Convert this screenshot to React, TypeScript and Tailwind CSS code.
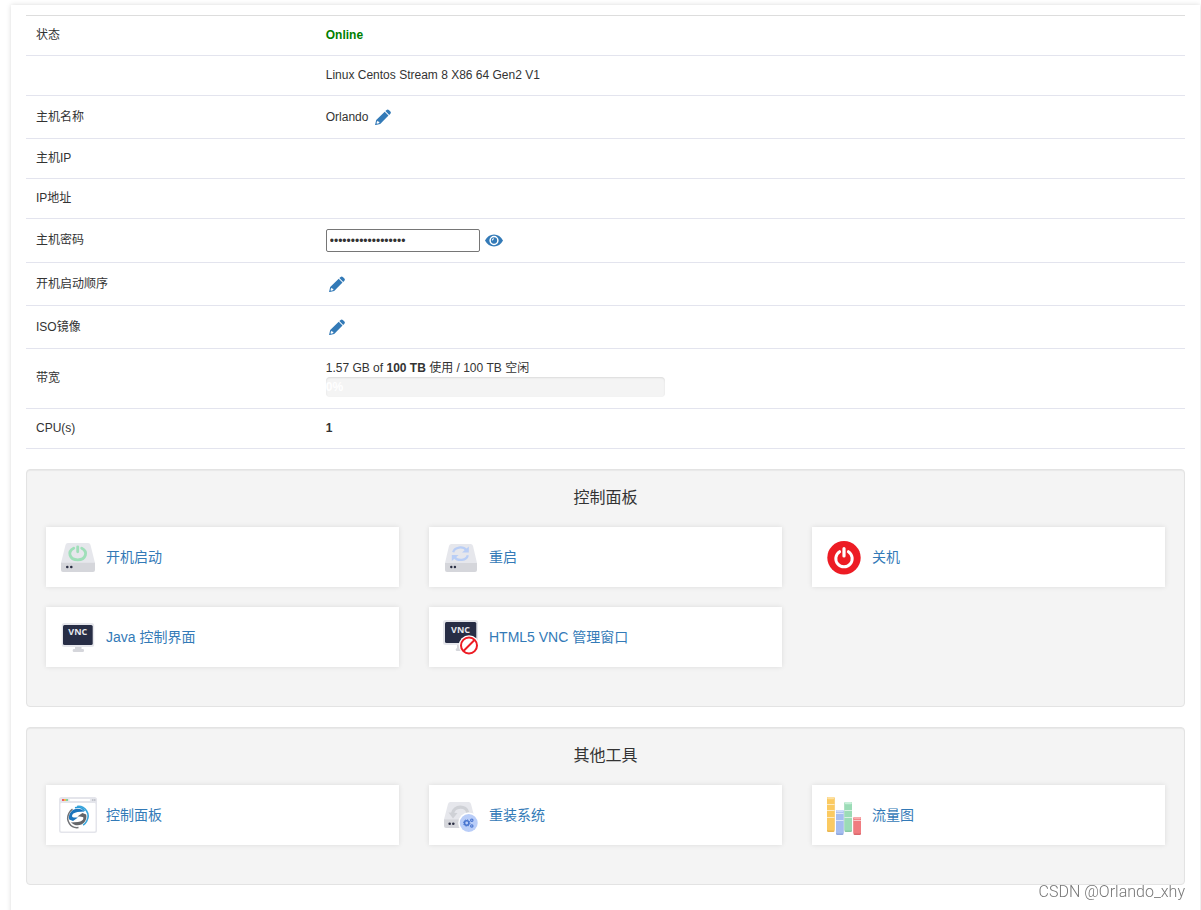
import { useState } from 'react';
import type { ReactNode } from 'react';

interface ToolItem {
  label: string;
  icon: ReactNode;
}

function PencilIcon() {
  return (
    <svg viewBox="0 0 16 16" className="block size-4" fill="#337ab7" aria-hidden="true">
      <path d="M11.600.9q1.100-1 2.200 0l1.600 1.600q1 1.100 0 2.200l-1.200 1.200-3.800-3.800z" />
      <path fillRule="evenodd" d="M9.700 2.800l3.800 3.800-8.300 8.300L0 16.200l1.200-5.100zM2.200 11.800l-.7 2.400.6.500 2.300-.6-.2-1.400-1.300-.2z" />
    </svg>
  );
}

function EyeIcon() {
  return (
    <svg viewBox="0 0 18 13" className="block h-[13px] w-[18px]" aria-hidden="true">
      <path d="M0 6.500C2 2.800 5.200.5 9 .5s7 2.300 9 6c-2 3.700-5.200 6-9 6s-7-2.300-9-6z" fill="#337ab7" />
      <circle cx="9" cy="6.500" r="3.900" fill="none" stroke="#fff" strokeWidth="1.500" />
      <path d="M7.300 6.300A1.900 1.900 0 0 1 9 4.800" stroke="#fff" strokeWidth="1.100" fill="none" />
    </svg>
  );
}

function StartIcon() {
  return (
    <svg viewBox="0 0 40 40" className="size-10 shrink-0" aria-hidden="true">
      <path d="M10 6h20q2 0 2.500 2L37 26H3L7.500 8Q8 6 10 6z" fill="#e6e7ec" />
      <path d="M3 25.700h34V33q0 2-2 2H5q-2 0-2-2z" fill="#d5d6db" />
      <circle cx="9.300" cy="30" r="1.300" fill="#2a2e43" />
      <circle cx="13.300" cy="30" r="1.300" fill="#2a2e43" />
      <path d="M15.700 11.200c-6.600 3.400-4.400 11.600 4 11.600s10.600-8.200 4-11.600" fill="none" stroke="#9fdfb9" strokeWidth="2.800" strokeLinecap="round" />
      <path d="M19.700 9.800v5" stroke="#9fdfb9" strokeWidth="2.800" strokeLinecap="round" />
    </svg>
  );
}

function RestartIcon() {
  return (
    <svg viewBox="0 0 40 40" className="size-10 shrink-0" aria-hidden="true">
      <path d="M10.500 7h19q2 0 2.500 2L36 26H4L8 9q.5-2 2.500-2z" fill="#e6e7ec" />
      <path d="M4 26h32v7q0 2-2 2H6q-2 0-2-2z" fill="#d5d6db" />
      <circle cx="10.300" cy="30" r="1.200" fill="#2a2e43" />
      <circle cx="13.900" cy="30" r="1.200" fill="#2a2e43" />
      <g fill="none" stroke="#b9cef6" strokeWidth="2.300">
        <path d="M12.200 15.200c1.300-5.400 9.800-6.300 13.300-2" />
        <path d="M26.800 18.200c-1.300 5.400-9.800 6.300-13.300 2" />
      </g>
      <path d="M27.800 9.500v6h-6.800zM10.800 24v-6h6.800z" fill="#b9cef6" />
    </svg>
  );
}

function ShutdownIcon() {
  return (
    <svg viewBox="0 0 40 40" className="size-10 shrink-0" aria-hidden="true">
      <circle cx="20" cy="20.700" r="16.700" fill="#ed1c24" />
      <path d="M15.600 14.700a8.200 8.200 0 1 0 8.800 0" fill="none" stroke="#fff" strokeWidth="3" strokeLinecap="round" />
      <path d="M20 11.700v7.300" stroke="#fff" strokeWidth="3.200" strokeLinecap="round" />
    </svg>
  );
}

function VncIcon() {
  return (
    <svg viewBox="0 0 40 40" className="size-10 shrink-0" aria-hidden="true">
      <path d="M17 29h6.500v4H17z" fill="#d5d6db" />
      <rect x="14.700" y="32" width="11.300" height="3" rx="1.200" fill="#d5d6db" />
      <rect x="3.700" y="6" width="32.500" height="24" rx="2.500" fill="#e6e7ec" />
      <rect x="5" y="8" width="29.700" height="20" rx="1.500" fill="#272d45" />
      <text x="19.800" y="18" textAnchor="middle" fontSize="9" fontWeight="700" fontFamily="Open Sans, sans-serif" fill="#e6e7ec">VNC</text>
    </svg>
  );
}

function VncBlockedIcon() {
  return (
    <svg viewBox="0 0 40 40" className="size-10 shrink-0" aria-hidden="true">
      <path d="M16 28h7v3h3v3H15.500q-2-1.500.5-3z" fill="#d5d6db" />
      <rect x="2" y="3" width="35" height="25" rx="2.500" fill="#e6e7ec" />
      <rect x="4" y="5" width="31.300" height="21" rx="1.500" fill="#272d45" />
      <text x="19.500" y="16" textAnchor="middle" fontSize="9" fontWeight="700" fontFamily="Open Sans, sans-serif" fill="#e6e7ec">VNC</text>
      <circle cx="28" cy="28.500" r="10.200" fill="#fff" />
      <circle cx="28" cy="28.500" r="8" fill="#fff" stroke="#ed1c24" strokeWidth="2" />
      <path d="M22.500 34l11-11" stroke="#ed1c24" strokeWidth="2" />
    </svg>
  );
}

function PanelIcon() {
  return (
    <svg viewBox="0 0 40 40" className="size-10 shrink-0" aria-hidden="true">
      <rect x="1" y="2" width="38" height="36" rx="2.500" fill="#e4e5eb" />
      <rect x="2.500" y="8" width="35" height="28.500" rx="1" fill="#fff" />
      <rect x="11.300" y="4" width="21" height="2" rx="1" fill="#fff" />
      <path d="M4 4h2v2H4z" fill="#ee5c64" />
      <path d="M6 4h2v2H6z" fill="#f5b94d" />
      <path d="M8 4h2v2H8z" fill="#82cf9f" />
      <path d="M34 4h1.500v2H34zM36 4h1.500v2H36z" fill="#c3c5cc" />
      <path d="M11.200 24.500C9.500 17 17 11.500 23.500 14.500l3 2-7 .5q-5.500 1-5.500 4 0 1.500 3.500 1.500h2.500l-5 3.500z" fill="#1c75bc" />
      <path d="M28.200 19.500c1.700 7.500-5.800 13-12.300 10l-3-2 7-.5q5.500-1 5.500-4 0-1.500-3.500-1.500h-2.500l5-3.500z" fill="#636569" />
      <path d="M17 12.800q6-1.800 9.500 3.200" fill="none" stroke="#2b9bd8" strokeWidth="1.500" />
      <path d="M19 11.500c8.500-1 13.500 7.500 9.800 14.500-1 2-2.200 3.200-3.700 4.200" fill="none" stroke="#38a5dc" strokeWidth="1.600" />
      <path d="M20.500 32.500c-8 1.200-13-7-9.700-14 1-2 2.200-3.300 3.700-4.300" fill="none" stroke="#707276" strokeWidth="1.500" />
    </svg>
  );
}

function ReinstallIcon() {
  return (
    <svg viewBox="0 0 40 40" className="size-10 shrink-0" aria-hidden="true">
      <path d="M9.500 7h18q2 0 2.500 2l4 15.500H3L7 9q.5-2 2.500-2z" fill="#e6e7ec" />
      <path d="M3 24.300h31V33H5q-2 0-2-2z" fill="#d5d6db" />
      <circle cx="8.700" cy="28.700" r="1.300" fill="#2a2e43" />
      <circle cx="12.300" cy="28.700" r="1.300" fill="#2a2e43" />
      <path d="M11.500 18.500c1.500-8.500 14-8.300 15.200-1" fill="none" stroke="#cfd1d6" strokeWidth="3.200" />
      <path d="M7.500 17.500l9 .5-4.500 5.500z" fill="#cfd1d6" />
      <circle cx="27.700" cy="28" r="10.500" fill="#fff" />
      <circle cx="27.700" cy="28" r="9" fill="#b9cdf8" />
      <g fill="none" stroke="#4774cf">
        <circle cx="25.700" cy="28" r="2.200" strokeWidth="1.600" />
        <circle cx="25.700" cy="28" r="3.200" strokeWidth="1" strokeDasharray="1.200 1.300" />
        <circle cx="30.800" cy="25.200" r="1.200" strokeWidth="1.100" />
        <circle cx="30.800" cy="30.900" r="1.200" strokeWidth="1.100" />
      </g>
    </svg>
  );
}

const bars = [
  { x: 3, y: 2, height: 35, body: '#fbca61', top: '#fde0a0', foot: '#e9b64f', cuts: [9, 15, 22] },
  { x: 12, y: 15, height: 25, body: '#a5bdf0', top: '#cddbfa', foot: '#8fa8df', cuts: [18, 25] },
  { x: 20.500, y: 7, height: 30, body: '#9bdcb6', top: '#c8f0d9', foot: '#88c9a3', cuts: [15, 22] },
  { x: 29.500, y: 22, height: 18, body: '#f07c80', top: '#f8abad', foot: '#db686d', cuts: [25] },
];

function TrafficIcon() {
  return (
    <svg viewBox="0 0 40 40" className="size-10 shrink-0" aria-hidden="true">
      {bars.map((bar) => (
        <g key={bar.x}>
          <rect x={bar.x} y={bar.y} width="7.500" height={bar.height} rx="1.200" fill={bar.foot} />
          <rect x={bar.x} y={bar.y} width="7.500" height={bar.height - 1.500} rx="1.200" fill={bar.body} />
          <rect x={bar.x} y={bar.y} width="7.500" height="2.200" rx="1.100" fill={bar.top} />
          {bar.cuts.map((cut) => (
            <rect key={cut} x={bar.x} y={cut} width="7.500" height="1" fill="#fff" opacity="0.6" />
          ))}
        </g>
      ))}
    </svg>
  );
}

const controls: ToolItem[] = [
  { label: '开机启动', icon: <StartIcon /> },
  { label: '重启', icon: <RestartIcon /> },
  { label: '关机', icon: <ShutdownIcon /> },
  { label: 'Java 控制界面', icon: <VncIcon /> },
  { label: 'HTML5 VNC 管理窗口', icon: <VncBlockedIcon /> },
];

const tools: ToolItem[] = [
  { label: '控制面板', icon: <PanelIcon /> },
  { label: '重装系统', icon: <ReinstallIcon /> },
  { label: '流量图', icon: <TrafficIcon /> },
];

function EditButton({ label }: { label: string }) {
  return (
    <button type="button" aria-label={label} className="cursor-pointer px-[3px] py-0.5">
      <PencilIcon />
    </button>
  );
}

function Row({ label, children }: { label: ReactNode; children?: ReactNode }) {
  return (
    <tr className="border-t border-[#e3e4ee] first:border-[#dddddd]">
      <th scope="row" className="h-10 w-1/4 px-2.5 py-[11px] text-left font-normal">{label}</th>
      <td className="px-2.5 py-[11px]">{children}</td>
    </tr>
  );
}

function ToolPanel({ title, items }: { title: string; items: ToolItem[] }) {
  return (
    <section className="mt-5 rounded border border-[#e3e3e3] bg-[#f4f4f4] px-[19px] pb-[39px] shadow-[inset_0_1px_1px_rgba(0,0,0,0.05)]">
      <h2 className="pt-4 pb-[17px] text-center text-base leading-6">{title}</h2>
      <div className="grid grid-cols-3 gap-x-[30px] gap-y-5">
        {items.map((item) => (
          <a
            key={item.label}
            href="#"
            className="flex h-[60px] items-center gap-2 bg-white px-3 text-sm text-[#337ab7] shadow-[0_0_5px_rgba(0,0,0,0.1)] hover:underline"
          >
            {item.icon}
            <span>{item.label}</span>
          </a>
        ))}
      </div>
    </section>
  );
}

export default function App() {
  const [showPassword, setShowPassword] = useState(false);
  const [password, setPassword] = useState('aB3dE5gH7jK9mN2pQ4');

  return (
    <div className="min-h-screen overflow-hidden bg-white pt-[5px] pr-px pl-[11px] font-['Liberation_Sans','Noto_Sans_CJK_SC',sans-serif] text-xs leading-[17px] text-[#333]">
      <main className="min-h-screen bg-white px-[15px] pt-2.5 shadow-[0_0_5px_rgba(0,0,0,0.15)]">
        <table className="w-full table-fixed border-b border-[#e3e4ee]">
          <tbody>
            <Row label="状态">
              <strong className="text-[#008000]">Online</strong>
            </Row>
            <Row label="">Linux Centos Stream 8 X86 64 Gen2 V1</Row>
            <Row label="主机名称">
              <div className="flex items-center gap-1">
                <span>Orlando</span>
                <EditButton label="修改主机名称" />
              </div>
            </Row>
            <Row label="主机IP" />
            <Row label="IP地址" />
            <Row label={<label htmlFor="password">主机密码</label>}>
              <div className="flex h-[21px] items-center gap-[5px]">
                <input
                  id="password"
                  type={showPassword ? 'text' : 'password'}
                  value={password}
                  onChange={(e) => setPassword(e.target.value)}
                  className="h-[23px] w-[154px] rounded-xs border border-[#767676] px-[3px]"
                />
                <button
                  type="button"
                  aria-label="显示密码"
                  onClick={() => setShowPassword(!showPassword)}
                  className="cursor-pointer"
                >
                  <EyeIcon />
                </button>
              </div>
            </Row>
            <Row label="开机启动顺序">
              <div className="flex">
                <EditButton label="修改开机启动顺序" />
              </div>
            </Row>
            <Row label="ISO镜像">
              <div className="flex">
                <EditButton label="修改ISO镜像" />
              </div>
            </Row>
            <Row label="带宽">
              <div className="h-[17px]">
                1.57 GB of <strong>100 TB</strong> 使用 / 100 TB 空闲
              </div>
              <div className="h-5 w-2/5 rounded bg-[#f4f4f4] shadow-[inset_0_1px_2px_rgba(0,0,0,0.1)]">
                <span className="leading-5 font-bold text-white">0%</span>
              </div>
            </Row>
            <Row label="CPU(s)">
              <strong>1</strong>
            </Row>
          </tbody>
        </table>
        <ToolPanel title="控制面板" items={controls} />
        <ToolPanel title="其他工具" items={tools} />
      </main>
      <div className="fixed right-4 bottom-1.5 font-[Roboto,sans-serif] text-base leading-6 font-light text-[#777] [text-shadow:1px_1px_1px_white]">CSDN @Orlando_xhy</div>
    </div>
  );
}
